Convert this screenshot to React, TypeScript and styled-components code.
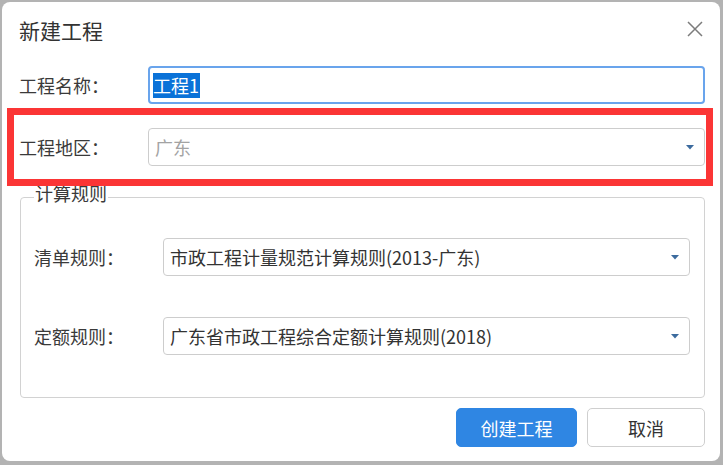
import styled, { createGlobalStyle } from "styled-components";

const GlobalStyle = createGlobalStyle`
  html, body {
    margin: 0;
    padding: 0;
    background: #b3b3b3;
  }

  body {
    font-family: "Noto Sans CJK SC", "Noto Sans", sans-serif;
    color: #333;
  }

  * {
    box-sizing: border-box;
  }
`;

function CloseIcon() {
  return (
    <svg width="16" height="16" viewBox="0 0 16 16">
      <path d="M1 1 L15 15 M15 1 L1 15" stroke="#7c7c7c" strokeWidth="1.5" fill="none" />
    </svg>
  );
}

function Caret() {
  return (
    <svg width="8" height="5" viewBox="0 0 8 5">
      <polygon points="0,0 8,0 4,4.5" fill="#3c6b9e" />
    </svg>
  );
}

type SelectProps = {
  value: string;
  muted?: boolean;
};

function Select({ value, muted }: SelectProps) {
  return (
    <SelectBox>
      <SelectText $muted={muted}>{value}</SelectText>
      <Caret />
    </SelectBox>
  );
}

export default function App() {
  return (
    <>
      <GlobalStyle />
      <Dialog>
        <Header>
          <Title>新建工程</Title>
          <CloseButton>
            <CloseIcon />
          </CloseButton>
        </Header>

        <Body>
          <Fields>
            <Row>
              <Label>工程名称：</Label>
              <TextInput>
                <Selected>工程1</Selected>
              </TextInput>
            </Row>

            <Row>
              <Label>工程地区：</Label>
              <Select value="广东" muted />
              <Highlight />
            </Row>
          </Fields>

          <Group>
            <Legend>计算规则</Legend>
            <GroupRows>
              <Row>
                <Label>清单规则：</Label>
                <Select value="市政工程计量规范计算规则(2013-广东)" />
              </Row>
              <Row>
                <Label>定额规则：</Label>
                <Select value="广东省市政工程综合定额计算规则(2018)" />
              </Row>
            </GroupRows>
          </Group>
        </Body>

        <Footer>
          <Button $primary $width={121}>
            创建工程
          </Button>
          <Button $width={118}>取消</Button>
        </Footer>
      </Dialog>
    </>
  );
}

const Dialog = styled.div`
  margin: 2px 0 0 2px;
  width: 718px;
  height: 459px;
  background: #fff;
  border-radius: 8px;
  display: flex;
  flex-direction: column;
  overflow: hidden;

  & > * {
    flex-shrink: 0;
  }
`;

const Header = styled.div`
  height: 56px;
  padding: 0 17px;
  display: flex;
  align-items: center;
  justify-content: space-between;
`;

const Title = styled.div`
  font-size: 21px;
  color: #333;
`;

const CloseButton = styled.div`
  display: flex;
  margin-top: -2px;
`;

const Body = styled.div`
  padding: 8px 15px 0 17px;
  display: flex;
  flex-direction: column;
`;

const Fields = styled.div`
  display: flex;
  flex-direction: column;
  gap: 24px;
`;

const Row = styled.div`
  position: relative;
  display: flex;
  align-items: center;
  height: 38px;
`;

const Label = styled.div`
  width: 129px;
  flex-shrink: 0;
  font-size: 18px;
  color: #3a3a3a;
`;

const TextInput = styled.div`
  flex: 1;
  height: 38px;
  border: 2px solid #69a4ec;
  border-radius: 4px;
  padding-left: 3px;
  display: flex;
  align-items: center;
`;

const Selected = styled.span`
  background: #0a72d8;
  color: #fff;
  font-size: 18px;
  line-height: 25px;
  padding-right: 1px;
`;

const SelectBox = styled.div`
  flex: 1;
  height: 38px;
  border: 1px solid #cdcdcd;
  border-radius: 4px;
  padding: 0 10px 0 6px;
  display: flex;
  align-items: center;
  justify-content: space-between;
`;

const SelectText = styled.span<{ $muted?: boolean }>`
  font-size: 18px;
  color: ${(p) => (p.$muted ? "#a3a3a3" : "#333")};
  white-space: nowrap;
`;

const Highlight = styled.div`
  position: absolute;
  top: -20px;
  bottom: -20px;
  left: -12px;
  right: -8px;
  border: 7px solid #fb3535;
  pointer-events: none;
`;

const Group = styled.fieldset`
  margin: 14px 0 0 1px;
  padding: 0 14px 42px 13px;
  border: 1px solid #d2d2d2;
  border-radius: 4px;
  min-width: 0;
`;

const Legend = styled.legend`
  margin-left: 0;
  padding: 0 1px 8px;
  font-size: 18px;
  color: #3a3a3a;
  line-height: 26px;
`;

const GroupRows = styled.div`
  padding-top: 24px;
  display: flex;
  flex-direction: column;
  gap: 41px;
`;

const Footer = styled.div`
  margin-top: 10px;
  padding-right: 15px;
  display: flex;
  justify-content: flex-end;
  gap: 10px;
`;

const Button = styled.div<{ $primary?: boolean; $width: number }>`
  width: ${(p) => p.$width}px;
  height: 39px;
  border-radius: 5px;
  display: flex;
  align-items: center;
  justify-content: center;
  font-size: 18px;
  background: ${(p) => (p.$primary ? "#2f86e3" : "#fff")};
  color: ${(p) => (p.$primary ? "#fff" : "#333")};
  border: 1px solid ${(p) => (p.$primary ? "#2f86e3" : "#cfcfcf")};
`;
